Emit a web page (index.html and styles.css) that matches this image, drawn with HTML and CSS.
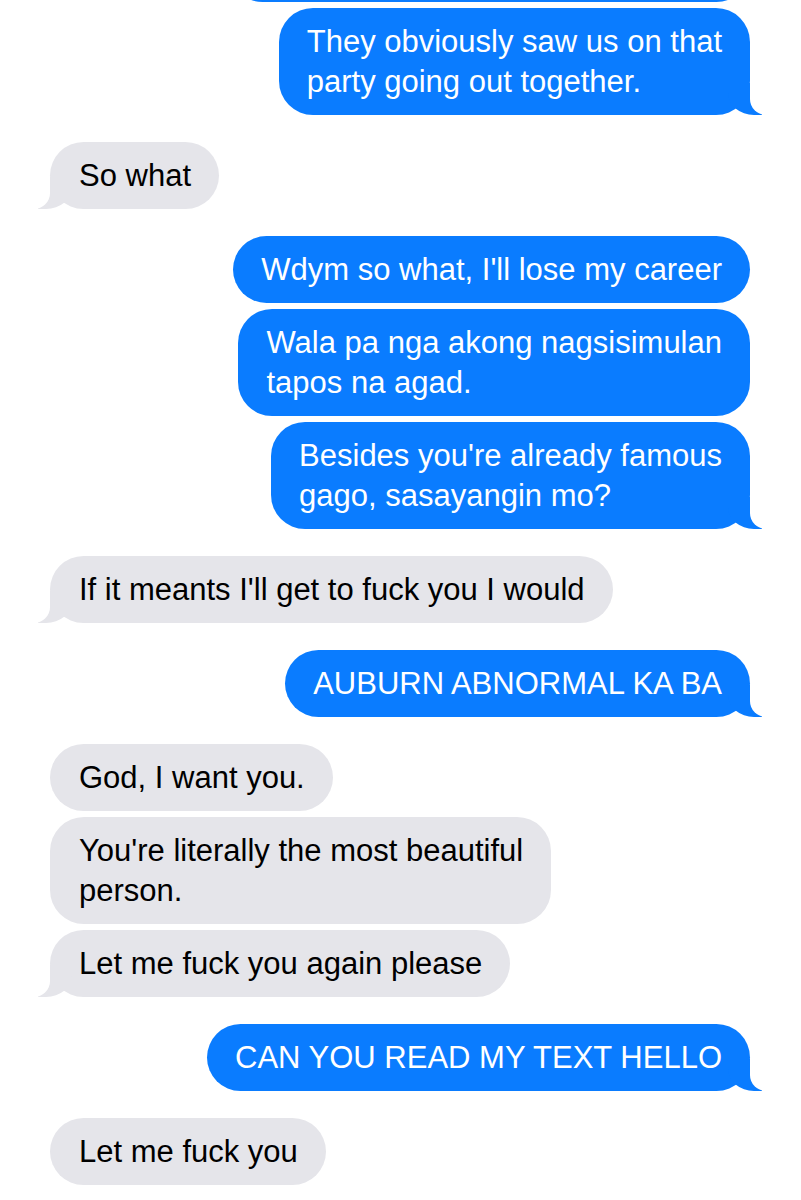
FILE: index.html
```html
<!DOCTYPE html>
<html lang="en">
<head>
    <meta charset="UTF-8">
    <meta name="viewport" content="width=device-width, initial-scale=1.0">
    <title>Messages</title>
    <link rel="stylesheet" href="styles.css">
</head>
<body>
    <div class="chat">
        <!-- earlier message, scrolled almost out of view -->
        <div class="group sent-group first">
            <div class="bubble sent earlier">&nbsp;</div>
            <div class="bubble sent tail">They obviously saw us on that<br>party going out together.</div>
        </div>

        <div class="group">
            <div class="bubble received tail">So what</div>
        </div>

        <div class="group sent-group">
            <div class="bubble sent">Wdym so what, I'll lose my career</div>
            <div class="bubble sent">Wala pa nga akong nagsisimulan<br>tapos na agad.</div>
            <div class="bubble sent tail">Besides you're already famous<br>gago, sasayangin mo?</div>
        </div>

        <div class="group">
            <div class="bubble received tail">If it meants I'll get to fuck you I would</div>
        </div>

        <div class="group sent-group">
            <div class="bubble sent tail">AUBURN ABNORMAL KA BA</div>
        </div>

        <div class="group">
            <div class="bubble received">God, I want you.</div>
            <div class="bubble received">You're literally the most beautiful<br>person.</div>
            <div class="bubble received tail">Let me fuck you again please</div>
        </div>

        <div class="group sent-group">
            <div class="bubble sent tail">CAN YOU READ MY TEXT HELLO</div>
        </div>

        <div class="group">
            <div class="bubble received">Let me fuck you</div>
        </div>
    </div>
</body>
</html>
```
FILE: styles.css
```css
body {
    margin: 0;
    padding: 0;
    background: #fff;
    font-family: "Liberation Sans", Arial, sans-serif;
    overflow: hidden;
}

.chat {
    display: flex;
    flex-direction: column;
    gap: 27px;
    padding: 0 51px 0 50px;
}

.group {
    display: flex;
    flex-direction: column;
    align-items: flex-start;
    gap: 6px;
}

.sent-group {
    align-items: flex-end;
}

.first {
    margin-top: -65px;
}

.bubble {
    position: relative;
    font-size: 31px;
    line-height: 40px;
    padding: 13.5px 28px;
    border-radius: 34px;
    white-space: nowrap;
}

.sent {
    background: #0a7cff;
    color: #fff;
}

.received {
    background: #e5e5ea;
    color: #000;
    padding-left: 29px;
}

.earlier {
    width: 465px;
}

/* message tails */
.bubble.tail::before,
.bubble.tail::after {
    content: "";
    position: absolute;
    bottom: 0;
    height: 32px;
}

.sent.tail::before {
    right: -12px;
    width: 34px;
    background: #0a7cff;
    border-bottom-left-radius: 26px 22px;
}

.sent.tail::after {
    right: -40px;
    width: 40px;
    background: #fff;
    border-bottom-left-radius: 16px;
}

.received.tail::before {
    left: -12px;
    width: 34px;
    background: #e5e5ea;
    border-bottom-right-radius: 26px 22px;
}

.received.tail::after {
    left: -40px;
    width: 40px;
    background: #fff;
    border-bottom-right-radius: 16px;
}
```
